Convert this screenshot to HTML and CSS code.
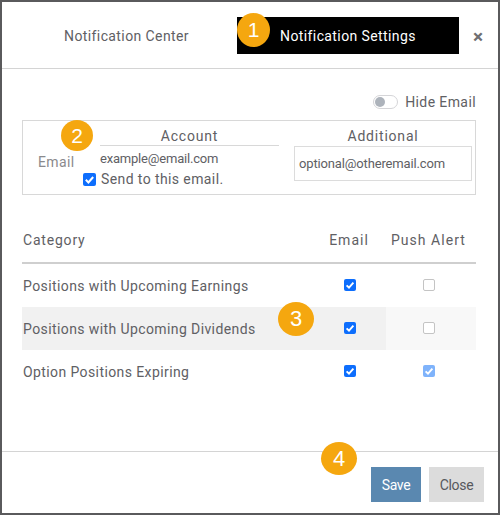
FILE: index.html
```html
<!DOCTYPE html>
<html lang="en">
<head>
<meta charset="utf-8">
<title>Notification Settings</title>
<link rel="stylesheet" href="styles.css">
</head>
<body>
<div class="modal">
  <header class="head">
    <div class="tab first-tab">Notification Center</div>
    <div class="tab active">Notification Settings</div>
    <div class="x">×</div>
  </header>
  <main class="body">
    <div class="hide-row">
      <span class="toggle"><span class="knob"></span></span>
      <span>Hide Email</span>
    </div>
    <section class="email-box">
      <div class="email-label">Email</div>
      <div class="account">
        <div class="col-title underlined">Account</div>
        <div class="addr">example@email.com</div>
        <label class="send"><span class="cb on big"><svg viewBox="0 0 12 12"><path d="M2.6 6.3l2.4 2.4 4.4-5"/></svg></span><span>Send to this email.</span></label>
      </div>
      <div class="additional">
        <div class="col-title">Additional</div>
        <div class="input">optional@otheremail.com</div>
      </div>
    </section>
    <section class="table">
      <div class="row th">
        <div class="c-name">Category</div>
        <div class="c-mail">Email</div>
        <div class="c-push">Push Alert</div>
      </div>
      <div class="row">
        <div class="c-name">Positions with Upcoming Earnings</div>
        <div class="c-mail"><span class="cb on"><svg viewBox="0 0 12 12"><path d="M2.6 6.3l2.4 2.4 4.4-5"/></svg></span></div>
        <div class="c-push"><span class="cb"></span></div>
      </div>
      <div class="row shaded">
        <div class="c-name">Positions with Upcoming Dividends</div>
        <div class="c-mail"><span class="cb on"><svg viewBox="0 0 12 12"><path d="M2.6 6.3l2.4 2.4 4.4-5"/></svg></span></div>
        <div class="c-push"><span class="cb"></span></div>
      </div>
      <div class="row">
        <div class="c-name">Option Positions Expiring</div>
        <div class="c-mail"><span class="cb on"><svg viewBox="0 0 12 12"><path d="M2.6 6.3l2.4 2.4 4.4-5"/></svg></span></div>
        <div class="c-push"><span class="cb on light"><svg viewBox="0 0 12 12"><path d="M2.6 6.3l2.4 2.4 4.4-5"/></svg></span></div>
      </div>
    </section>
  </main>
  <footer class="foot">
    <button class="btn save">Save</button>
    <button class="btn close">Close</button>
  </footer>
  <span class="badge b1">1</span>
  <span class="badge b2">2</span>
  <span class="badge b3">3</span>
  <span class="badge b4">4</span>
</div>
</body>
</html>
```

FILE: styles.css
```css
* { box-sizing: border-box; }
html, body { margin: 0; padding: 0; }
body { width: 500px; height: 516px; background: #fff; font-family: Roboto, "Liberation Sans", sans-serif; color: #606064; font-size: 14px; letter-spacing: 0.4px; }
.modal { position: relative; width: 500px; height: 515px; border: 2px solid #5a5a5c; display: flex; flex-direction: column; background: #fff; }
.head { height: 67px; flex: none; border-bottom: 1px solid #d4d4d4; display: flex; align-items: flex-start; padding: 15px 0 0 62px; }
.tab { height: 37px; line-height: 38px; white-space: nowrap; }
.first-tab { width: 173px; }
.active { width: 222px; background: #000; color: #fff; padding-left: 43px; }
.x { margin-left: 14px; width: 12px; line-height: 40px; font-size: 19px; font-weight: 700; color: #6f6f72; letter-spacing: 0; }
.body { flex: 1; padding: 0 22px 0 20px; }
.hide-row { height: 51px; display: flex; align-items: center; justify-content: flex-end; gap: 7px; padding-top: 15px; }
.toggle { width: 25px; height: 14px; border: 1px solid #d5d5d8; border-radius: 7px; display: flex; align-items: center; padding-left: 1px; }
.knob { width: 10px; height: 10px; border-radius: 50%; background: #adb3bb; }
.email-box { height: 75px; border: 1px solid #d8d8d8; display: flex; }
.email-label { width: 77px; padding: 33px 0 0 15px; color: #8a8a8d; }
.account { width: 179px; }
.col-title { height: 25px; line-height: 31px; text-align: center; letter-spacing: 0.8px; }
.underlined { border-bottom: 1px solid #d8d8d8; }
.addr { height: 23px; line-height: 25px; font-size: 13px; letter-spacing: -0.2px; }
.send { display: flex; align-items: center; gap: 5px; margin-left: -17px; height: 20px; }
.additional { width: 178px; margin-left: 15px; }
.input { height: 35px; border: 1px solid #dcdcdc; line-height: 34px; padding-left: 4px; font-size: 13px; letter-spacing: -0.15px; white-space: nowrap; }
.cb { display: inline-block; width: 12px; height: 12px; border: 1px solid #c4c4c4; border-radius: 2px; background: #fff; }
.cb svg { display: block; width: 100%; height: 100%; fill: none; stroke: #fff; stroke-width: 1.9; }
.cb.on { border: 0; background: #0d6efd; }
.cb.light { background: #7fb3fb; }
.cb.big { width: 13px; height: 13px; flex: none; }
.table { margin-top: 25px; }
.row { display: flex; align-items: center; height: 43px; white-space: nowrap; }
.th { height: 44px; border-bottom: 2px solid #cfcfcf; padding-bottom: 3px; }
.c-name { width: 303px; padding-left: 1px; }
.th .c-name { letter-spacing: 0.8px; }
.c-mail { width: 50px; display: flex; justify-content: center; }
.c-push { width: 101px; display: flex; justify-content: center; padding-left: 6px; }
.row .cb { margin-top: -2px; }
.th .c-mail { letter-spacing: 1px; padding-right: 2px; }
.th .c-push { justify-content: flex-end; padding: 0 10px 0 0; letter-spacing: 1.05px; }
.shaded { background: linear-gradient(to right, #f1f1f1 0, #f1f1f1 364px, #f8f8f8 364px); }
.foot { height: 62px; flex: none; border-top: 1px solid #d4d4d4; display: flex; justify-content: flex-end; gap: 8px; padding: 15px 14px 0 0; }
.btn { height: 35px; border: 0; font-family: inherit; font-size: 14px; letter-spacing: -0.3px; padding: 0; }
.save { width: 50px; background: #5a88b0; color: #fff; }
.close { width: 55px; background: #dcdcdc; color: #57585c; }
.badge { position: absolute; border-radius: 50%; background: #f5a70f; color: #fff; display: flex; align-items: center; justify-content: center; font-family: "Liberation Sans", sans-serif; letter-spacing: 0; }
.b1 { left: 235px; top: 11px; width: 33px; height: 34px; font-size: 21px; }
.b2 { left: 59px; top: 118px; width: 32px; height: 31px; font-size: 21px; }
.b3 { left: 276px; top: 300px; width: 36px; height: 34px; font-size: 22px; }
.b4 { left: 319px; top: 440px; width: 36px; height: 33px; font-size: 22px; }
```
